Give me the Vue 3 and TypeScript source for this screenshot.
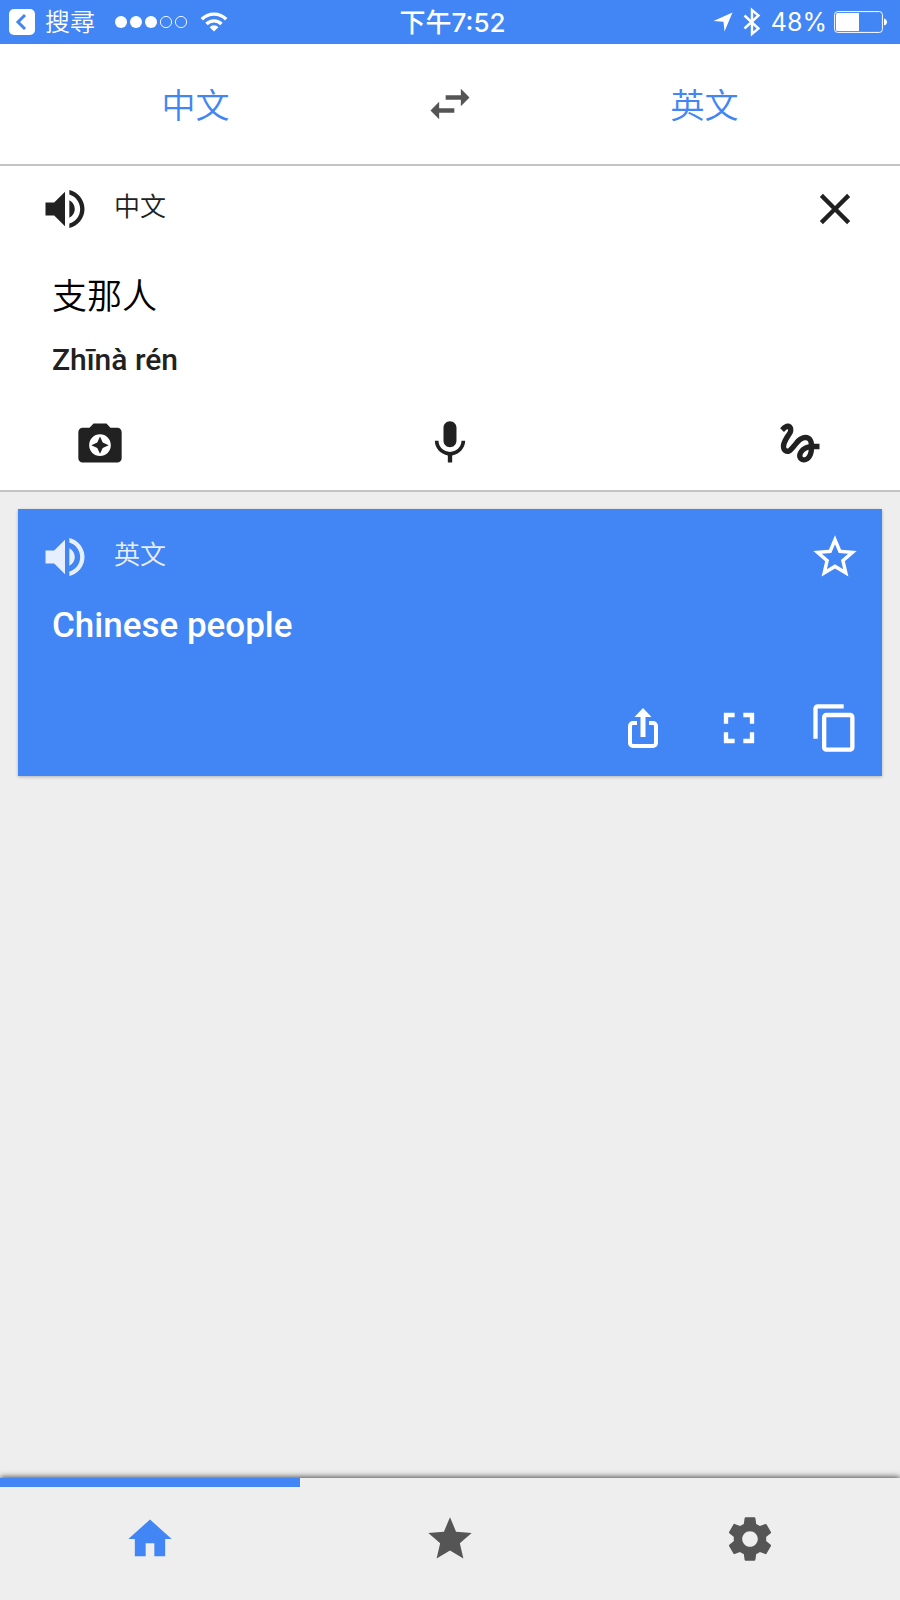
<script setup lang="ts">
import { ref } from 'vue'

interface Tab {
  id: string
  label: string
  path: string
}

const volumePath =
  'M3 9v6h4l5 5V4L7 9H3zm13.5 3c0-1.77-1.02-3.29-2.5-4.03v8.05c1.48-.73 2.5-2.25 2.5-4.02zM14 3.23v2.06c2.89.86 5 3.54 5 6.71s-2.11 5.85-5 6.71v2.06c4.01-.91 7-4.49 7-8.77s-2.99-7.86-7-8.77z'

const tabs: Tab[] = [
  { id: 'home', label: '首頁', path: 'M10 20v-6h4v6h5v-8h3L12 3 2 12h3v8z' },
  {
    id: 'saved',
    label: '已儲存',
    path: 'M12 17.27L18.18 21l-1.64-7.03L22 9.24l-7.19-.61L12 2 9.19 8.63 2 9.24l5.46 4.73L5.82 21z',
  },
  {
    id: 'settings',
    label: '設定',
    path: 'M19.43 12.98c.04-.32.07-.64.07-.98s-.03-.66-.07-.98l2.11-1.65c.19-.15.24-.42.12-.64l-2-3.46c-.12-.22-.39-.3-.61-.22l-2.49 1c-.52-.4-1.08-.73-1.69-.98l-.38-2.65C14.46 2.18 14.25 2 14 2h-4c-.25 0-.46.18-.49.42l-.38 2.65c-.61.25-1.17.59-1.69.98l-2.49-1c-.23-.09-.49 0-.61.22l-2 3.46c-.13.22-.07.49.12.64l2.11 1.65c-.04.32-.07.65-.07.98s.03.66.07.98l-2.11 1.65c-.19.15-.24.42-.12.64l2 3.46c.12.22.39.3.61.22l2.49-1c.52.4 1.08.73 1.69.98l.38 2.65c.03.24.24.42.49.42h4c.25 0 .46-.18.49-.42l.38-2.65c.61-.25 1.17-.59 1.69-.98l2.49 1c.23.09.49 0 .61-.22l2-3.46c.12-.22.07-.49-.12-.64l-2.11-1.65zM12 15.6c-1.98 0-3.6-1.62-3.6-3.6s1.62-3.6 3.6-3.6 3.6 1.62 3.6 3.6-1.62 3.6-3.6 3.6z',
  },
]

const activeTab = ref('home')
const sourceText = ref('支那人')
const signal = [true, true, true, false, false]
</script>

<template>
  <div class="app">
    <div class="status">
      <div class="status-left">
        <button class="back" type="button">
          <svg width="26" height="26" viewBox="0 0 26 26" aria-hidden="true">
            <rect width="26" height="26" rx="5" fill="#fff" />
            <path d="M16 6l-7 7 7 7" fill="none" stroke="#4285f4" stroke-width="3" />
          </svg>
          <span>搜尋</span>
        </button>
        <svg width="74" height="14" viewBox="0 0 74 14" aria-hidden="true">
          <circle
            v-for="(on, i) in signal"
            :key="i"
            :cx="7 + i * 15"
            cy="7"
            :r="on ? 6 : 5.6"
            :fill="on ? '#fff' : 'none'"
            stroke="#fff"
            :stroke-width="on ? 0 : 0.9"
          />
        </svg>
        <svg class="wifi" width="28" height="22" viewBox="0 0 28 22" aria-hidden="true">
          <g fill="none" stroke="#fff" stroke-width="3.4">
            <path d="M1.8 8.2a17.2 17.2 0 0 1 24.4 0" />
            <path d="M6.5 13a10.6 10.6 0 0 1 15 0" />
          </g>
          <path d="M9.6 16.2a6.2 6.2 0 0 1 8.8 0L14 20.6z" fill="#fff" />
        </svg>
      </div>
      <span class="time">下午7:52</span>
      <div class="status-right">
        <svg width="20" height="20" viewBox="0 0 20 20" aria-hidden="true">
          <path d="M19.5 .5L11.5 19.5 10.5 9.8 .5 9z" fill="#fff" />
        </svg>
        <svg class="bt" width="18" height="30" viewBox="0 0 18 30" aria-hidden="true">
          <path d="M1.5 8.5L15.500 21.500 9 27V3l6.500 5.500L1.500 21.500" fill="none" stroke="#fff" stroke-width="2.4" />
        </svg>
        <span>48%</span>
        <svg width="54" height="22" viewBox="0 0 54 22" aria-hidden="true">
          <rect x=".6" y=".6" width="47.8" height="20.8" rx="3" fill="none" stroke="#fff" stroke-width="1" />
          <path d="M3.5 2H25v18H3.5A1.5 1.5 0 0 1 2 18.500v-15A1.5 1.5 0 0 1 3.5 2z" fill="#fff" />
          <path d="M50 7.500c4 1 4 6 0 7z" fill="#fff" />
        </svg>
      </div>
    </div>

    <header class="languages">
      <button class="language" type="button">中文</button>
      <button class="icon-button swap" type="button" aria-label="交換語言">
        <svg class="icon" viewBox="0 0 24 24"><path d="M6.99 11L3 15l3.990 4v-3H14v-2H6.990v-3zM21 9l-3.990-4v3H10v2h7.010v3L21 9z" /></svg>
      </button>
      <button class="language" type="button">英文</button>
    </header>

    <section class="source">
      <div class="row">
        <button class="icon-button" type="button" aria-label="聆聽原文">
          <svg class="icon" viewBox="0 0 24 24"><path :d="volumePath" /></svg>
        </button>
        <label class="row-label" for="source-text">中文</label>
        <button class="icon-button end" type="button" aria-label="清除" @click="sourceText = ''">
          <svg class="icon" viewBox="0 0 24 24"><path d="M19 6.410L17.590 5 12 10.590 6.410 5 5 6.410 10.590 12 5 17.590 6.410 19 12 13.410 17.590 19 19 17.590 13.410 12z" /></svg>
        </button>
      </div>
      <input id="source-text" v-model="sourceText" class="source-text" type="text" />
      <p class="pinyin">Zhīnà rén</p>
      <div class="inputs">
        <button class="icon-button" type="button" aria-label="相機">
          <svg class="icon" viewBox="0 0 24 24"><path fill-rule="evenodd" d="M9 3L7.170 5H4c-1.100 0-2 .9-2 2v12c0 1.100.9 2 2 2h16c1.100 0 2-.9 2-2V7c0-1.100-.9-2-2-2h-3.170L15 3H9zm3 15c-2.760 0-5-2.240-5-5s2.240-5 5-5 5 2.240 5 5-2.240 5-5 5zm0-1l1.250-2.750L16 13l-2.750-1.250L12 9l-1.250 2.750L8 13l2.750 1.250z" /></svg>
        </button>
        <button class="icon-button" type="button" aria-label="語音">
          <svg class="icon" viewBox="0 0 24 24"><path d="M12 14c1.660 0 2.990-1.340 2.990-3L15 5c0-1.660-1.340-3-3-3S9 3.340 9 5v6c0 1.660 1.340 3 3 3zm5.300-3c0 3-2.540 5.100-5.300 5.100S6.700 14 6.700 11H5c0 3.410 2.720 6.230 6 6.720V21h2v-3.280c3.280-.48 6-3.300 6-6.720h-1.700z" /></svg>
        </button>
        <button class="icon-button" type="button" aria-label="手寫">
          <svg class="icon" viewBox="0 0 24 24"><path d="M4.590 6.890c.7-.71 1.400-1.350 1.710-1.220.5.2 0 1.030-.3 1.520-.25.42-2.860 3.890-2.860 6.310 0 1.280.48 2.340 1.340 2.980.75.56 1.740.73 2.640.46 1.070-.31 1.950-1.400 3.060-2.770 1.210-1.490 2.830-3.440 4.080-3.440 1.630 0 1.650 1.010 1.760 1.790-3.780.64-5.380 3.670-5.380 5.370 0 1.700 1.440 3.090 3.210 3.090 1.630 0 4.290-1.330 4.690-6.100H21v-2.500h-2.470c-.15-1.650-1.090-4.200-4.030-4.200-2.250 0-4.180 1.910-4.940 2.840-.58.73-2.060 2.480-2.290 2.720-.25.3-.68.84-1.110.84-.45 0-.72-.83-.36-1.920.35-1.090 1.400-2.860 1.850-3.520.78-1.140 1.300-1.920 1.300-3.280C8.950 3.690 7.310 3 6.440 3 5.120 3 3.970 4 3.720 4.250c-.36.36-.66.66-.88.93l1.750 1.710zm9.290 11.660c-.31 0-.74-.26-.74-.72 0-.6.73-2.200 2.870-2.760-.3 2.690-1.430 3.480-2.130 3.480z" /></svg>
        </button>
      </div>
    </section>

    <main class="results">
      <article class="card">
        <div class="row">
          <button class="icon-button soft" type="button" aria-label="聆聽譯文">
            <svg class="icon" viewBox="0 0 24 24"><path :d="volumePath" /></svg>
          </button>
          <span class="row-label soft">英文</span>
          <button class="icon-button end" type="button" aria-label="加入收藏">
            <svg class="icon" viewBox="0 0 24 24"><path d="M22 9.240l-7.190-.62L12 2 9.190 8.630 2 9.240l5.460 4.730L5.820 21 12 17.270 18.180 21l-1.630-7.030L22 9.240zM12 15.400l-3.760 2.270 1-4.280-3.320-2.880 4.380-.38L12 6.100l1.710 4.040 4.380.38-3.320 2.880 1 4.280L12 15.400z" /></svg>
          </button>
        </div>
        <p class="translation">Chinese people</p>
        <div class="actions">
          <button class="icon-button" type="button" aria-label="分享">
            <svg class="icon" viewBox="0 0 52 52">
              <path d="M20 21h-4a3 3 0 0 0-3 3v17a3 3 0 0 0 3 3h20a3 3 0 0 0 3-3V24a3 3 0 0 0-3-3h-4" fill="none" stroke="currentColor" stroke-width="4" />
              <path d="M26 6l8.500 9H28.500v20h-5V15h-6z" />
            </svg>
          </button>
          <button class="icon-button" type="button" aria-label="全螢幕">
            <svg class="icon" viewBox="0 0 24 24"><path d="M7 14H5v5h5v-2H7v-3zm-2-4h2V7h3V5H5v5zm12 7h-3v2h5v-5h-2v3zM14 5v2h3v3h2V5h-5z" /></svg>
          </button>
          <button class="icon-button" type="button" aria-label="複製">
            <svg class="icon" viewBox="0 0 24 24"><path d="M16 1H4c-1.100 0-2 .9-2 2v14h2V3h12V1zm3 4H8c-1.100 0-2 .9-2 2v14c0 1.100.9 2 2 2h11c1.100 0 2-.9 2-2V7c0-1.100-.9-2-2-2zm0 16H8V7h11v14z" /></svg>
          </button>
        </div>
      </article>
    </main>

    <nav class="tabs">
      <button
        v-for="tab in tabs"
        :key="tab.id"
        class="tab"
        :class="{ active: tab.id === activeTab }"
        type="button"
        :aria-label="tab.label"
        @click="activeTab = tab.id"
      >
        <svg class="icon" viewBox="0 0 24 24"><path :d="tab.path" /></svg>
      </button>
    </nav>
  </div>
</template>

<style>
body {
  margin: 0;
  background: #eee;
}
</style>

<style scoped>
.app {
  display: flex;
  flex-direction: column;
  min-height: 100vh;
  background: #eee;
  color: #212121;
  font-family: Roboto, "Noto Sans CJK TC", sans-serif;
}

button {
  margin: 0;
  padding: 0;
  border: 0;
  background: none;
  color: inherit;
  font: inherit;
  cursor: pointer;
}

p {
  margin: 0;
}

svg {
  display: block;
  flex: none;
}

.icon {
  width: 52px;
  height: 52px;
  fill: currentColor;
}

.status {
  display: grid;
  grid-template-columns: 1fr auto 1fr;
  align-items: center;
  height: 44px;
  padding: 0 12px 0 9px;
  background: #4285f4;
  color: #fff;
  font-family: Inter, "Noto Sans CJK TC", sans-serif;
  font-size: 25px;
  line-height: 44px;
}

.status-left,
.status-right,
.back {
  display: flex;
  align-items: center;
}

.back {
  gap: 10px;
  margin-right: 19px;
  font-weight: 350;
}

.wifi {
  margin-left: 12px;
}

.time {
  padding: 2px 0 0 8px;
  font-size: 26px;
  font-weight: 500;
  line-height: 42px;
}

.status-right {
  justify-content: flex-end;
  gap: 7px;
}

.bt {
  margin: 0 3px;
}

.languages {
  display: grid;
  grid-template-columns: 1fr 118px 1fr;
  align-items: center;
  height: 120px;
  border-bottom: 2px solid #c4c4c4;
  background: #fff;
}

.language {
  padding-top: 4px;
  color: #4285f4;
  font-size: 34px;
  font-weight: 350;
  line-height: 52px;
}

.swap {
  justify-self: center;
  color: #555;
}

.source {
  padding: 17px 39px 21px;
  border-bottom: 2px solid #c4c4c4;
  background: #fff;
}

.row {
  display: flex;
  align-items: center;
}

.row-label {
  margin-left: 23px;
  font-size: 26px;
  font-weight: 350;
  line-height: 48px;
  padding-bottom: 4px;
}

.end {
  margin-left: auto;
}

.source-text {
  display: block;
  box-sizing: border-box;
  width: 100%;
  height: 44px;
  margin-top: 37px;
  padding: 0 13px;
  border: 0;
  outline: 0;
  background: transparent;
  color: #000;
  font-family: "Noto Sans CJK TC", sans-serif;
  font-size: 35px;
  font-weight: 350;
  line-height: 44px;
}

.pinyin {
  margin-top: 24px;
  padding: 0 13px;
  font-size: 30px;
  font-weight: 500;
  line-height: 40px;
}

.inputs {
  display: flex;
  justify-content: space-between;
  margin-top: 37px;
  padding: 0 35px;
}

.results {
  flex: 1;
  padding: 17px 18px;
}

.card {
  padding: 22px 21px;
  background: #4285f4;
  box-shadow: 0 1px 3px rgba(0, 0, 0, 0.25);
  color: #fff;
}

.soft {
  opacity: 0.87;
}

.translation {
  margin-top: 21px;
  padding: 0 13px;
  font-size: 35px;
  font-weight: 500;
  line-height: 44px;
}

.actions {
  display: flex;
  justify-content: flex-end;
  gap: 44px;
  margin-top: 54px;
}

.tabs {
  display: grid;
  grid-template-columns: repeat(3, 1fr);
  background: #eee;
  box-shadow: 0 -1px 6px rgba(0, 0, 0, 0.7);
}

.tab {
  display: flex;
  justify-content: center;
  padding: 26px 0 35px;
  border-top: 9px solid transparent;
  color: #555;
}

.tab.active {
  border-top-color: #4285f4;
  color: #4285f4;
}
</style>
